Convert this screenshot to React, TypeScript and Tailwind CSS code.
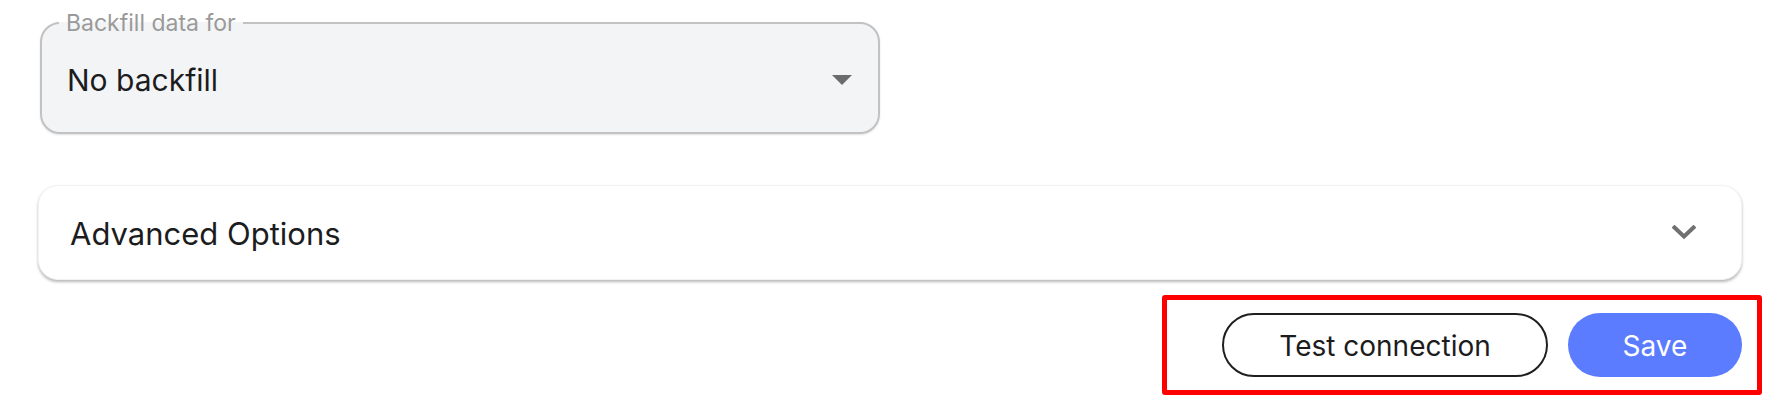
import React from "react";

const font = { fontFamily: "Inter, 'Noto Sans', sans-serif" };

function CaretDown() {
  return (
    <svg width="20" height="10" viewBox="0 0 20 10" className="shrink-0">
      <polygon points="0,0 20,0 10,10" fill="#6b6b6b" />
    </svg>
  );
}

function ChevronDown() {
  return (
    <svg width="24" height="15" viewBox="0 0 24 15" className="shrink-0">
      <polyline points="2.5,2.5 12,11.5 21.5,2.5" fill="none" stroke="#707070" strokeWidth="4" strokeLinecap="square" />
    </svg>
  );
}

export default function App() {
  return (
    <div className="w-[1780px] h-[406px] bg-white px-[38px] pt-[12px] overflow-hidden" style={font}>
      <fieldset className="ml-[2px] w-[840px] border-2 border-[#c2c2c2] rounded-[20px] bg-[#f3f4f6] shadow-[0_1px_2px_rgba(0,0,0,0.12)]">
        <legend className="ml-[17px] px-[7px] text-[23px] leading-[22px] text-[#9a9a9a]">Backfill data for</legend>
        <div className="h-[98px] flex items-center justify-between pl-[25px] pr-[26px] pb-[6px]">
          <span className="text-[30px] text-[#1c1c1e]">No backfill</span>
          <CaretDown />
        </div>
      </fieldset>

      <div className="mt-[51px] h-[95px] rounded-[20px] bg-white border border-[#f2f2f2] shadow-[0_2px_3px_rgba(0,0,0,0.28)] flex items-center justify-between pl-[31px] pr-[45px]">
        <span className="pt-[4px] text-[31px] text-[#1c1c1e]">Advanced Options</span>
        <ChevronDown />
      </div>

      <div className="mt-[15px] -mr-[20px] flex justify-end">
        <div className="w-[600px] h-[100px] border-[5px] border-[#ff0000] rounded-[3px] flex items-center justify-end gap-[20px] pr-[15px]">
          <button type="button" className="w-[326px] h-[64px] rounded-full border-2 border-[#1f1f1f] bg-white pt-[2px] text-[28px] text-[#1c1c1e]">
            Test connection
          </button>
          <button type="button" className="w-[174px] h-[64px] rounded-full bg-[#5b7cff] pt-[2px] text-[28px] text-white">
            Save
          </button>
        </div>
      </div>
    </div>
  );
}
